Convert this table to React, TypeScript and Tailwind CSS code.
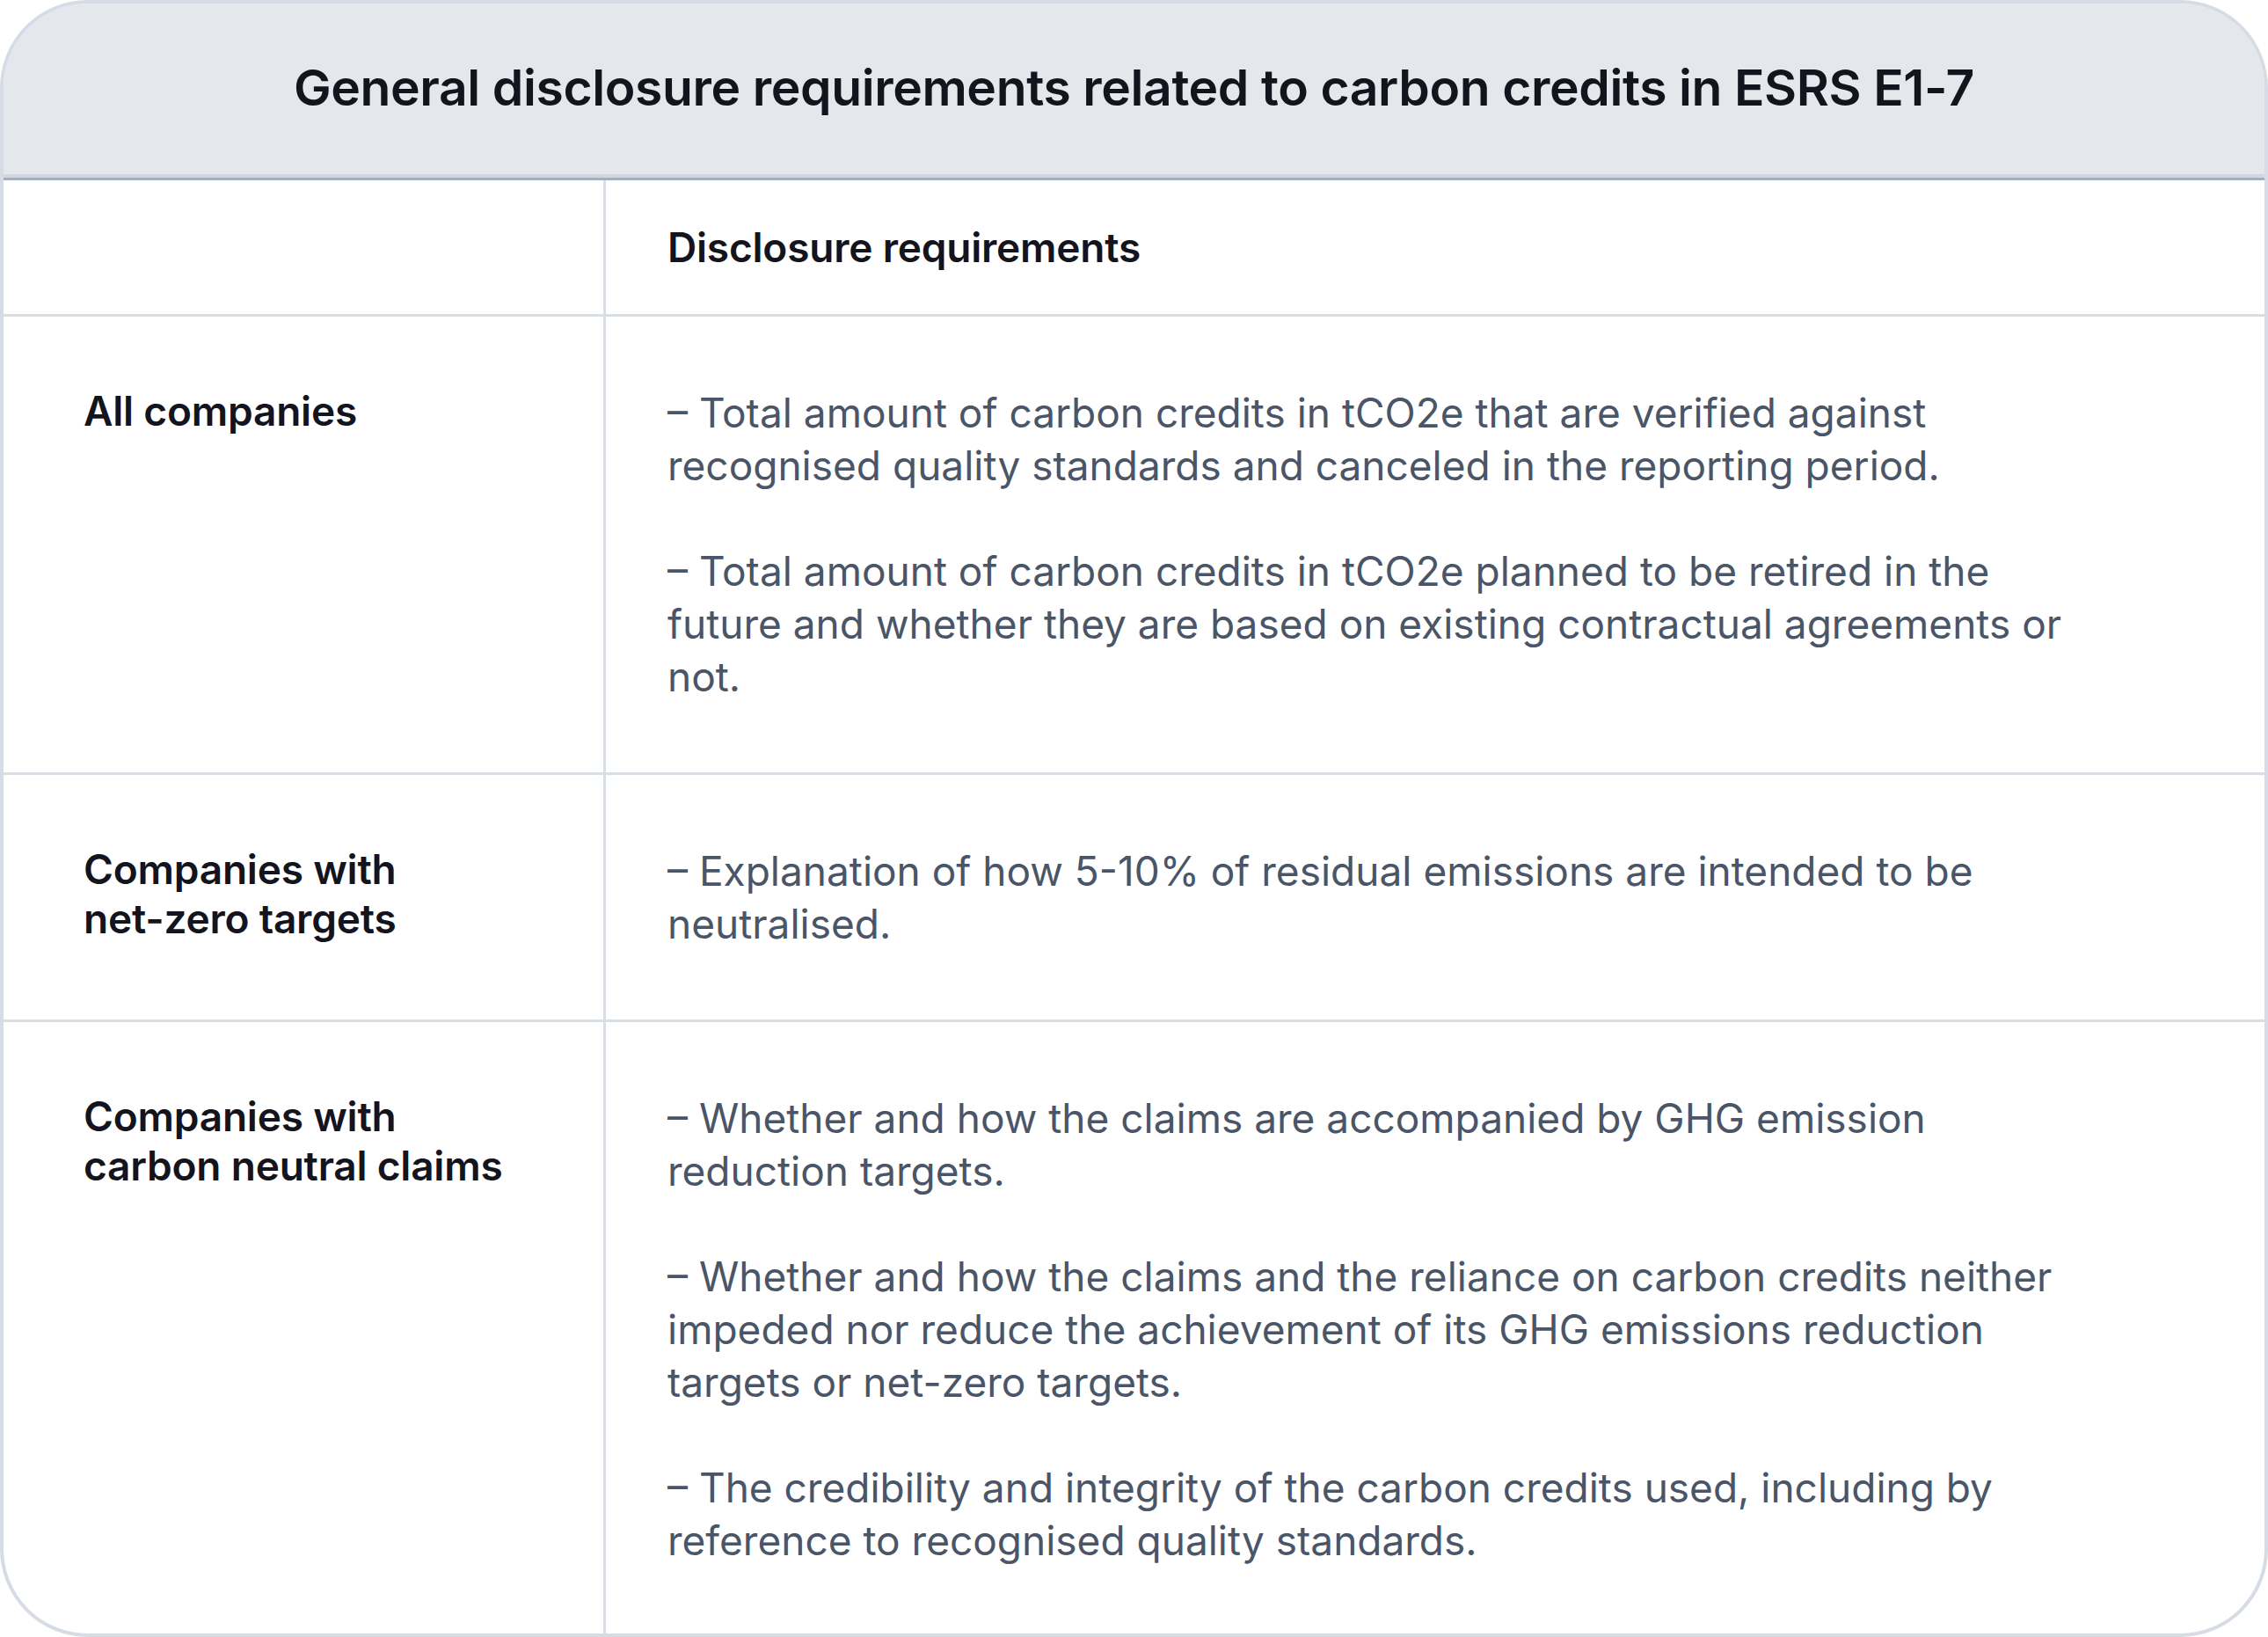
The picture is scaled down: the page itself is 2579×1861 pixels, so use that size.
import React from "react";

const font = { fontFamily: "Inter, 'Noto Sans', sans-serif" };

function Row({
  label,
  items,
  last,
}: {
  label: React.ReactNode;
  items: string[];
  last?: boolean;
}) {
  return (
    <div className={`flex ${last ? "flex-1" : "border-b-[3px] border-[#d8dee6]"}`}>
      <div className="w-[685px] shrink-0 border-r-[3px] border-[#d8dee6] pl-[91px] pr-[40px] py-[79px]">
        <div className="text-[46px] leading-[56px] font-semibold text-[#13141d] tracking-[-0.2px]">
          {label}
        </div>
      </div>
      <div className="flex-1 pl-[70px] py-[79px]">
        <div className="max-w-[1610px] flex flex-col gap-[60px] text-[46px] leading-[60px] text-[#4a5568]">
          {items.map((t, i) => (
            <p key={i} className="m-0">
              {t}
            </p>
          ))}
        </div>
      </div>
    </div>
  );
}

export default function App() {
  return (
    <div className="w-[2579px] h-[1861px] bg-white" style={font}>
      <div className="h-full border-[4px] border-[#d5dce5] rounded-[100px] overflow-hidden flex flex-col">
        <div className="h-[198px] shrink-0 bg-[#e4e7ec] flex items-center justify-center border-b-[4px] border-[#d1d7df]">
          <h1 className="m-0 text-[57px] font-semibold text-[#13141d] tracking-[-0.4px] pb-[2px]">
            General disclosure requirements related to carbon credits in ESRS E1-7
          </h1>
        </div>
        <div className="flex border-t-[3px] border-t-[#a3aec0] border-b-[3px] border-b-[#d8dee6]">
          <div className="w-[685px] shrink-0 border-r-[3px] border-[#d8dee6]" />
          <div className="flex-1 pl-[70px] py-[48px] text-[46px] leading-[56px] font-semibold text-[#13141d] tracking-[-0.2px]">
            Disclosure requirements
          </div>
        </div>
        <Row
          label="All companies"
          items={[
            "– Total amount of carbon credits in tCO2e that are verified against recognised quality standards and canceled in the reporting period.",
            "– Total amount of carbon credits in tCO2e planned to be retired in the future and whether they are based on existing contractual agreements or not.",
          ]}
        />
        <Row
          label={
            <>
              Companies with
              <br />
              net-zero targets
            </>
          }
          items={[
            "– Explanation of how 5-10% of residual emissions are intended to be neutralised.",
          ]}
        />
        <Row
          last
          label={
            <>
              Companies with
              <br />
              carbon neutral claims
            </>
          }
          items={[
            "– Whether and how the claims are accompanied by GHG emission reduction targets.",
            "– Whether and how the claims and the reliance on carbon credits neither impeded nor reduce the achievement of its GHG emissions reduction targets or net-zero targets.",
            "– The credibility and integrity of the carbon credits used, including by reference to recognised quality standards.",
          ]}
        />
      </div>
    </div>
  );
}
